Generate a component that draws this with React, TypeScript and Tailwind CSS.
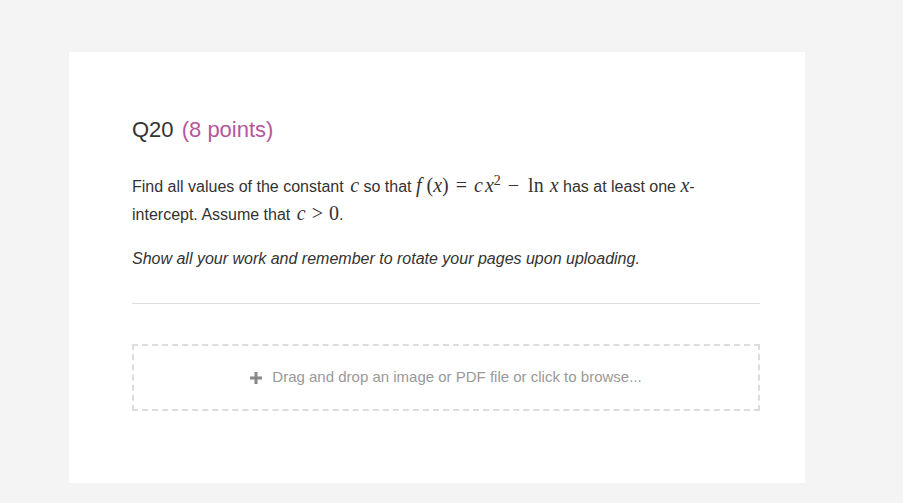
import React from "react";

const serif = '"Liberation Serif", "DejaVu Serif", serif';
const M = ({ children, className = "" }: { children: React.ReactNode; className?: string }) => (
  <span className={"italic text-[20px] " + className} style={{ fontFamily: serif }}>
    {children}
  </span>
);
const U = ({ children, className = "" }: { children: React.ReactNode; className?: string }) => (
  <span className={"not-italic text-[20px] " + className} style={{ fontFamily: serif }}>
    {children}
  </span>
);

export default function App() {
  return (
    <div className="min-h-[503px] w-full bg-[#f4f4f4] pt-[52px] pb-[20px]" style={{ fontFamily: '"Liberation Sans", Arial, sans-serif' }}>
      <div className="ml-[69px] w-[736px] bg-white pl-[63px] pr-[45px] pt-[63px] pb-[72px]">
        <h2 className="text-[22px] leading-[30px] text-[#333]">
          Q20 <span className="ml-[2px] text-[#b5579c]">(8 points)</span>
        </h2>
        <p className="mt-[27px] text-[16px] leading-[27px] text-[#333]">
          Find all values of the constant <M className="ml-[2px]">c</M> so that{" "}
          <span className="whitespace-nowrap">
            <M>f</M>
            <U className="ml-[5px]">(</U>
            <M>x</M>
            <U>)</U>
            <U className="mx-[7px]">=</U>
            <M>c</M>
            <M className="ml-[2px]">x</M>
            <sup className="text-[14px]" style={{ fontFamily: serif }}>2</sup>
            <U className="ml-[7px] mr-[9px]">−</U>
            <U>ln</U>
            <M className="ml-[6px]">x</M>
          </span>{" "}
          has at least one <M>x</M>-
          <br />
          intercept. Assume that <M className="ml-[2px]">c</M>
          <U className="mx-[6px]">&gt;</U>
          <U>0</U>.
        </p>
        <p className="mt-[17px] text-[16px] leading-[27px] italic text-[#333]">
          Show all your work and remember to rotate your pages upon uploading.
        </p>
        <div className="mt-[31px] h-px bg-[#ddd]" />
        <div className="mt-[40px] flex h-[67px] items-center justify-center border-2 border-dashed border-[#dcdcdc] text-[15px] text-[#999]">
          <svg width="12" height="12" viewBox="0 0 12 12" className="mr-[10px]">
            <rect x="4.5" y="0" width="3" height="12" fill="#888" />
            <rect x="0" y="4.5" width="12" height="3" fill="#888" />
          </svg>
          Drag and drop an image or PDF file or click to browse...
        </div>
      </div>
    </div>
  );
}
